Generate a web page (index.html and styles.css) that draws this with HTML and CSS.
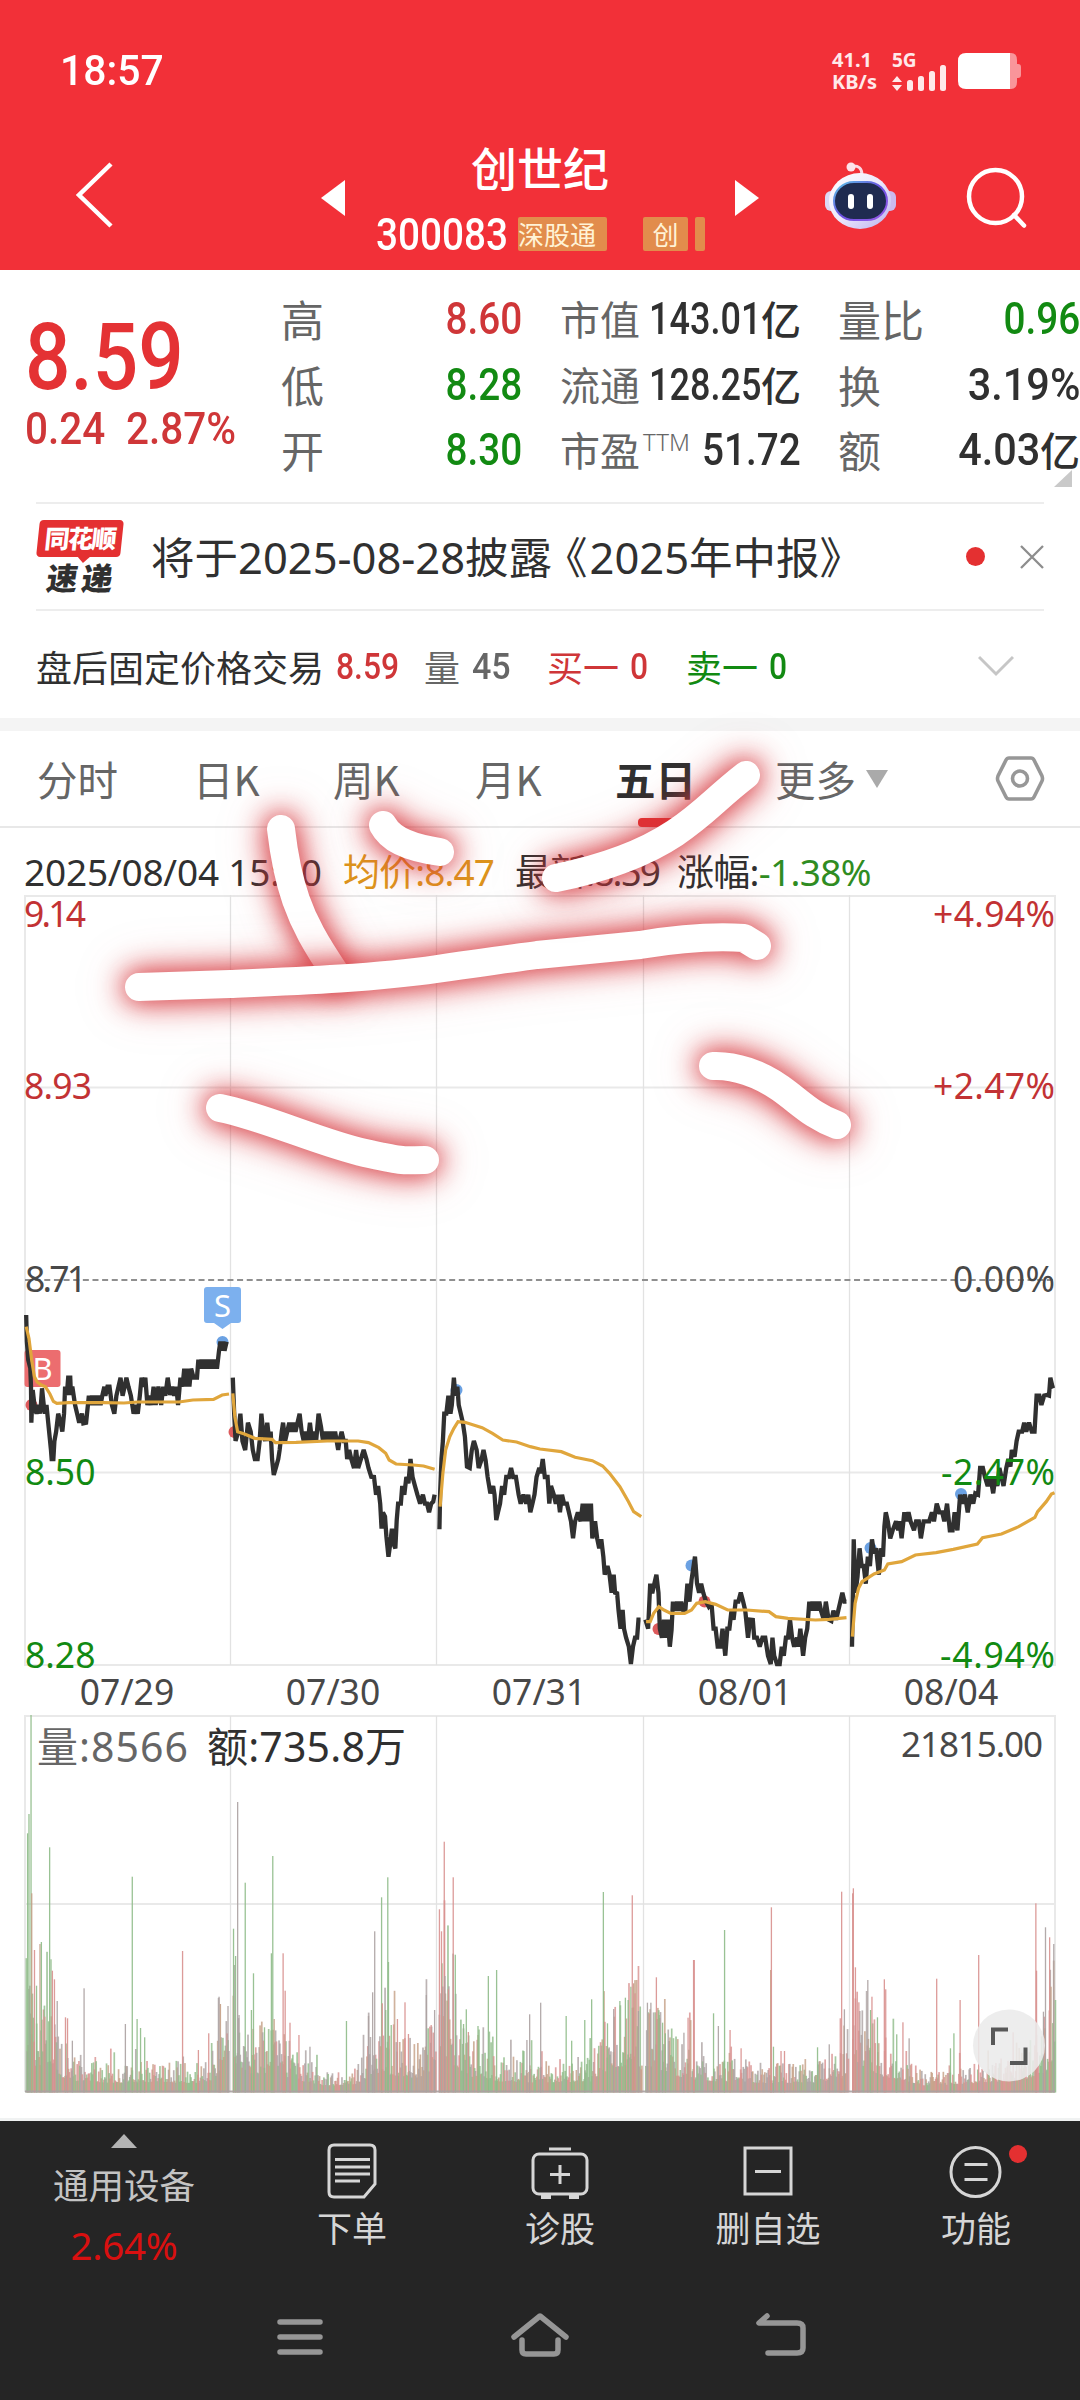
FILE: index.html
```html
<!DOCTYPE html>
<html lang="zh-CN">
<head>
<meta charset="utf-8">
<title>创世纪 300083</title>
<link rel="stylesheet" href="styles.css">
</head>
<body>
<div class="screen">
  <header class="top">
    <div class="status">
      <span class="clock din">18:57</span>
      <div class="status-right">
        <div class="speed"><span>41.1</span><span>KB/s</span></div>
        <svg class="signal" width="56" height="44" viewBox="0 0 56 44">
          <text x="0" y="18" class="sig-text">5G</text>
          <g fill="#ffe9ea"><path d="M5 27l5 6H0zM5 42l5-6H0z"/><rect x="15" y="31" width="6" height="11" rx="2.5"/><rect x="26" y="27" width="6" height="15" rx="2.5"/><rect x="37" y="22" width="6" height="20" rx="2.5"/><rect x="48" y="16" width="6" height="26" rx="2.5"/></g>
        </svg>
        <svg class="battery" width="64" height="36" viewBox="0 0 64 36">
          <path d="M52 0h1q6 0 6 7v4h1q3 0 3 3v8q0 3-3 3h-1v4q0 7-6 7h-1z" fill="#f9959a"/>
          <path d="M8 0h44v36H8q-8 0-8-8V8q0-8 8-8z" fill="#fff"/>
        </svg>
      </div>
    </div>
    <div class="titlebar">
      <svg class="back" width="40" height="70" viewBox="0 0 40 70"><path d="M36 4L4 35l32 31" fill="none" stroke="#fff" stroke-width="4.5"/></svg>
      <svg class="prev" width="24" height="36" viewBox="0 0 24 36"><path d="M24 0v36L0 18z" fill="#fff"/></svg>
      <div class="stock">
        <h1>创世纪</h1>
        <div class="codeline"><span class="din code">300083</span><span class="tag tag-a">深股通</span><span class="tag tag-b">创</span><span class="tag tag-c"></span></div>
      </div>
      <svg class="next" width="24" height="36" viewBox="0 0 24 36"><path d="M0 0v36l24-18z" fill="#fff"/></svg>
      <svg class="robot" width="74" height="68" viewBox="0 0 74 68">
        <defs><linearGradient id="shell" x1="0" y1="0" x2="1" y2="1"><stop offset="0" stop-color="#fff"/><stop offset=".5" stop-color="#ece8fb"/><stop offset="1" stop-color="#b8b0ee"/></linearGradient>
        <linearGradient id="rim" x1="0" y1="0" x2="1" y2="1"><stop offset="0" stop-color="#5cc8e8"/><stop offset=".5" stop-color="#6a4fe0"/><stop offset="1" stop-color="#9a5ce8"/></linearGradient></defs>
        <path d="M28 4q10-1 10 9" fill="none" stroke="#fbd9e4" stroke-width="3"/><circle cx="27" cy="5" r="4.5" fill="#fde3ea"/>
        <rect x="1" y="29" width="14" height="20" rx="6" fill="#dcd9f6"/><rect x="58" y="29" width="14" height="20" rx="6" fill="#cbb9ee"/>
        <rect x="5" y="11" width="62" height="56" rx="31" ry="28" fill="url(#shell)"/>
        <rect x="10" y="20" width="53" height="38" rx="20" fill="#1f2b50" stroke="url(#rim)" stroke-width="2"/>
        <rect x="24" y="32" width="6" height="15" rx="3" fill="#fff"/><rect x="43" y="32" width="6" height="15" rx="3" fill="#fff"/>
      </svg>
      <svg class="search" width="62" height="62" viewBox="0 0 62 62"><g fill="none" stroke="#fff" stroke-width="4.5"><circle cx="29.500" cy="29.500" r="26.500"/><path d="M48 48l10 10.500" stroke-linecap="round"/></g></svg>
    </div>
  </header>

  <section class="quote">
    <div class="price-col">
      <div class="price din">8.59</div>
      <div class="delta"><span class="din">0.24</span><span class="din">2.87%</span></div>
    </div>
    <div class="stats">
      <span class="lab">高</span><span class="val up"><b class="din">8.60</b></span><span class="lab">市值</span><span class="val"><b class="din tight">143.01</b>亿</span><span class="lab">量比</span><span class="val down"><b class="din">0.96</b></span>
      <span class="lab">低</span><span class="val down"><b class="din">8.28</b></span><span class="lab">流通</span><span class="val"><b class="din tight">128.25</b>亿</span><span class="lab">换</span><span class="val"><b class="din wide">3.19%</b></span>
      <span class="lab">开</span><span class="val down"><b class="din">8.30</b></span><span class="lab">市盈<sup>TTM</sup></span><span class="val"><b class="din">51.72</b></span><span class="lab">额</span><span class="val"><b class="din wide">4.03</b>亿</span>
    </div>
    <i class="corner"></i>
  </section>

  <section class="news">
    <div class="logo"><span class="logo-top">同花顺</span><span class="logo-bot">速递</span></div>
    <p>将于2025-08-28披露<span class="open">《</span>2025年中报》</p>
    <i class="dot"></i>
    <svg width="24" height="24" viewBox="0 0 24 24"><path d="M1 1l22 22M23 1L1 23" stroke="#8d8d8d" stroke-width="2.300"/></svg>
  </section>

  <section class="after">
    <span class="after-t">盘后固定价格交易</span><b class="din up a1">8.59</b>
    <span class="gray a2">量</span><b class="din gray a3">45</b>
    <span class="up a4">买一</span><b class="din up a5">0</b>
    <span class="down a6">卖一</span><b class="din down a7">0</b>
    <svg class="chev" width="36" height="22" viewBox="0 0 36 22"><path d="M1 2l17 17L35 2" fill="none" stroke="#c6c6c6" stroke-width="3"/></svg>
  </section>
  <div class="band"></div>

  <nav class="tabs">
    <span>分时</span><span>日K</span><span>周K</span><span>月K</span><span class="on">五日</span><span class="more">更多<i></i></span>
    <svg width="50" height="48" viewBox="0 0 50 48"><g fill="none" stroke="#979797" stroke-width="3.600"><path d="M14 3h22q2 0 3 2l8 16q1 3 0 5l-8 16q-1 2-3 2H14q-2 0-3-2L3 26q-1-2 0-5l8-16q1-2 3-2z"/><circle cx="25" cy="23.500" r="7.500"/></g></svg>
  </nav>

  <div class="info">
    <span>2025/08/04 15:00</span><span class="avg">均价:8.47</span><span class="last">最新:8.59</span><span>涨幅:<em>-1.38%</em></span>
  </div>

  <svg class="chart" width="1080" height="1224" viewBox="0 894 1080 1224">
    <g fill="none" stroke="#e9e9e9" stroke-width="2">
      <path d="M24 896H1056M24 1087.500H1056M24 1472.500H1056M24 1665H1056M24 1716H1056M24 1904H1056M25 895V1665M1055 895V1665M25 1716V2092M1055 1716V2092"/>
      <path stroke="#e2e2e2" stroke-width="1.300" d="M230.500 895V1665M436.500 895V1665M643.500 895V1665M849.500 895V1665M230.500 1716V2092M436.500 1716V2092M643.500 1716V2092M849.500 1716V2092"/>
    </g>
    <path d="M25 1280H1055" stroke="#8f8f8f" stroke-width="1.800" stroke-dasharray="6 3.640" fill="none"/>
    <g fill="#6ba1e2"><circle cx="222.500" cy="1342" r="6"/><circle cx="456.500" cy="1390" r="6"/><circle cx="691.500" cy="1565.500" r="6"/><circle cx="870.500" cy="1548" r="6"/><circle cx="961" cy="1494" r="6"/></g>
    <g fill="#dd5a5c"><circle cx="31.500" cy="1405" r="6"/><circle cx="234.500" cy="1432" r="6"/><circle cx="658.500" cy="1629" r="6"/><circle cx="704.500" cy="1601.500" r="6"/></g>
    <rect x="24.500" y="1350" width="36" height="37" rx="3" fill="#ec6d6f"/>
    <path d="M207 1287h31q3 0 3 3v30q0 3-3 3h-7l-8.500 6-8.500-6h-7q-3 0-3-3v-30q0-3 3-3z" fill="#7cb0ee"/>
    <text x="222.500" y="1317" class="mk" text-anchor="middle">S</text>
    <text x="42.500" y="1380" class="mk" text-anchor="middle">B</text>
    <g id="lines"></g>
    <g class="ax">
      <g class="t-up"><text x="24" y="927" textLength="62">9.14</text><text x="24" y="1099" textLength="68">8.93</text><text x="1055" y="927" text-anchor="end" textLength="122">+4.94%</text><text x="1055" y="1099" text-anchor="end" textLength="122">+2.47%</text></g>
      <g class="t-n"><text x="25" y="1292" textLength="62">8.71</text><text x="1055" y="1292" text-anchor="end" textLength="102">0.00%</text>
        <g text-anchor="middle"><text x="127" y="1705">07/29</text><text x="333" y="1705">07/30</text><text x="539" y="1705">07/31</text><text x="745" y="1705">08/01</text><text x="951" y="1705">08/04</text></g></g>
      <g class="t-dn"><text x="25" y="1485">8.50</text><text x="25" y="1668">8.28</text><text x="1055" y="1485" text-anchor="end" textLength="114">-2.47%</text><text x="1055" y="1668" text-anchor="end" textLength="115">-4.94%</text></g>
    </g>
    <g id="volume"></g>
    <text x="37" y="1762" class="vt vt-g" textLength="151">量:8566</text><text x="207" y="1762" class="vt" textLength="199">额:735.8万</text>
    <text x="1043" y="1757" class="vmax" text-anchor="end" textLength="142">21815.00</text>
    <circle cx="1009" cy="2045.500" r="36" fill="#ebebeb" fill-opacity=".88"/>
    <g fill="none" stroke="#585858" stroke-width="4"><path d="M993 2045v-15.500h15M1025.500 2047.500v15.500h-15.500"/></g>
  </svg>

  <footer class="toolbar">
    <div class="sector"><i></i><span>通用设备</span><em>2.64%</em></div>
    <div class="tool"><svg width="60" height="60" viewBox="0 0 60 60"><g fill="none" stroke="#d6d6d6" stroke-width="3"><path d="M12 4h36q5 0 5 5v34l-11 13H12q-5 0-5-5V9q0-5 5-5z"/><path d="M13 18.500h35M13 26h35M13 33h35M13 40h25"/></g></svg><span>下单</span></div>
    <div class="tool"><svg width="60" height="60" viewBox="0 0 60 60"><g fill="none" stroke="#d6d6d6" stroke-width="3"><rect x="3" y="13" width="54" height="40" rx="6"/><path d="M19 8h22M30 24v19M20 33.500h20"/><path d="M11 56h10M39 56h10" stroke-width="4"/></g></svg><span>诊股</span></div>
    <div class="tool"><svg width="60" height="60" viewBox="0 0 60 60"><g fill="none" stroke="#d6d6d6" stroke-width="3"><rect x="7" y="7" width="46" height="46"/><path d="M17 30.500h26"/></g></svg><span>删自选</span></div>
    <div class="tool"><svg width="60" height="60" viewBox="0 0 60 60"><g fill="none" stroke="#d6d6d6" stroke-width="3"><circle cx="29.500" cy="31" r="24.500"/><path d="M18.500 23.500h23M18.500 38.500h23"/></g></svg><i class="badge"></i><span>功能</span></div>
  </footer>
  <div class="sysnav">
    <svg width="60" height="50" viewBox="0 0 60 50"><path d="M10 10h40M10 25h40M10 40h40" stroke="#969696" stroke-width="5.500" stroke-linecap="round"/></svg>
    <svg width="60" height="50" viewBox="0 0 60 50"><path d="M4 25L30 4l26 21M12 28v10q0 4 4 4h28q4 0 4-4V28" fill="none" stroke="#969696" stroke-width="5.500" stroke-linecap="round" stroke-linejoin="round"/></svg>
    <svg width="60" height="50" viewBox="0 0 60 50"><path d="M17 4l-8 7h38q6 0 6 5v20q0 5-6 5H18" fill="none" stroke="#969696" stroke-width="5.500" stroke-linecap="round" stroke-linejoin="round"/></svg>
  </div>

  <svg class="ink" width="1080" height="2400" viewBox="0 0 1080 2400">
    <path d="M281 829C284 855 288 877 296 900S315 943 336 974"/>
    <path d="M139 987L230 984C300 981 375 978 437 969S500 960 537 955L640 945Q700 935 744 938L757 946"/>
    <path d="M383 825C390 838 405 847 440 852"/>
    <path d="M556 878C605 868 645 853 675 833S715 799 746 775"/>
    <path d="M220 1108C265 1117 320 1143 365 1153S405 1160 425 1160"/>
    <path d="M713 1066C735 1065 760 1074 780 1088S812 1116 837 1125"/>
  </svg>
</div>
<script src="chart.js"></script>
</body>
</html>
```
FILE: styles.css
```css
* { box-sizing: border-box; }
body { margin: 0; background: #fff; }
.screen { position: relative; width: 1080px; height: 2400px; overflow: hidden; background: #fff; color: #303030; font-family: "Noto Sans", "Noto Sans CJK SC", sans-serif; }
h1, p { margin: 0; }
i, em { font-style: normal; }
.din { display: inline-block; font-family: Roboto, "Liberation Sans", sans-serif; font-weight: 500; transform: scaleX(.86); transform-origin: left center; white-space: nowrap; }
.up { color: #cf3638; }
.down { color: #128a12; }
.gray { color: #666; }

.top { height: 270px; background: #f23038; color: #fff; }
.status { height: 140px; padding: 0 58px 0 60px; display: flex; align-items: center; justify-content: space-between; }
.clock { font-size: 43px; transform: scaleX(.95); }
.status-right { display: flex; align-items: center; padding-top: 2px; color: #ffe9ea; }
.speed { display: flex; flex-direction: column; width: 60px; font: 700 20px/22px "Noto Sans", sans-serif; }
.signal { margin-right: 10px; }
.sig-text { font: 700 19px "Noto Sans", sans-serif; fill: #ffe9ea; }
.titlebar { height: 130px; display: flex; align-items: flex-start; padding-left: 75px; }
.back { margin-top: 20px; }
.prev { margin: 40px 0 0 206px; }
.stock { width: 390px; text-align: center; }
h1 { margin-top: -1px; font: 500 46px/54px "Noto Sans CJK SC", sans-serif; }
.codeline { display: flex; align-items: center; height: 40px; margin-top: 21px; padding-left: 31px; }
.code { font-size: 45px; width: 142px; text-align: left; }
.tag { height: 34px; background: #e28c4c; color: #fff3d6; font: 400 26px/33px "Noto Sans CJK SC", sans-serif; border-radius: 2px; }
.tag-a { width: 89px; text-align: left; }
.tag-b { width: 45px; margin-left: 36px; }
.tag-c { width: 10px; margin-left: 7px; }
.next { margin: 40px 0 0 0; }
.robot { margin: 22px 0 0 65px; }
.search { margin: 27px 0 0 68px; }

.quote { height: 232px; position: relative; display: flex; }
.price-col { width: 281px; padding-left: 25px; }
.price { font-size: 92px; line-height: 100px; margin-top: 38px; color: #e43234; transform: scaleX(.87); }
.delta { display: flex; gap: 11px; color: #cf3638; margin-top: -2px; }
.delta .din { font-size: 44px; line-height: 46px; transform: scaleX(.92); }
.delta .din:first-child { width: 90px; }
.stats { display: grid; grid-template-columns: 80px 199px 80px 198px 100px 142px; grid-auto-rows: 65.500px; padding-top: 16px; height: 214px; font: 400 40px/65px "Noto Sans CJK SC", sans-serif; }
.lab { color: #666; white-space: nowrap; }
.lab:nth-child(6n+1), .lab:nth-child(6n+5) { font-size: 43px; }
.lab sup { font: 300 24px/24px "Noto Sans", sans-serif; vertical-align: 15px; margin-left: 3px; }
.val { display: flex; justify-content: flex-end; align-items: center; font-weight: 500; white-space: nowrap; }
.val .din { transform-origin: right center; font-size: 45px; }
.val .tight { transform: scaleX(.8); }
.val .wide { transform: scaleX(.92); }
.val:nth-child(6n+2) { padding-right: 38px; }
.val:nth-child(6n+4) { padding-right: 37px; }
.corner { position: absolute; right: 8px; bottom: 15px; width: 18px; height: 17px; background: #c9c9c9; clip-path: polygon(100% 0, 100% 100%, 0 100%); }

.news { height: 109px; margin: 0 36px; border-top: 2px solid #ededed; border-bottom: 2px solid #ededed; display: flex; align-items: center; }
.logo { width: 91px; height: 74px; display: flex; flex-direction: column; align-items: flex-start; margin-left: 2px; }
.logo-top { width: 84px; height: 37px; background: #e43031; color: #fff; border-radius: 4px; font: 900 25px/34px "Noto Sans CJK SC", sans-serif; text-align: center; transform: skewX(-6deg); letter-spacing: -1.500px; }
.logo-bot { position: relative; font: 900 31px/32px "Noto Sans CJK SC", sans-serif; letter-spacing: 4px; padding-left: 9px; transform: skewX(-8deg); margin-top: 4px; white-space: nowrap; }
.logo-bot::before { content: ""; position: absolute; left: 36px; top: -5px; border: 7px solid transparent; border-top-color: #e43031; border-bottom: 0; }
.news p { flex: 1; padding-left: 22px; font: 400 43.500px/60px "Noto Sans", "Noto Sans CJK SC", sans-serif; white-space: nowrap; }
.open { margin-left: -8px; margin-right: 2px; }
.dot { width: 19px; height: 19px; border-radius: 50%; background: #e43031; margin-right: 35px; }

.after { height: 107px; padding: 2px 66px 0 36px; display: flex; align-items: center; font: 400 36px/50px "Noto Sans CJK SC", sans-serif; }
.after .din { font-size: 37px; line-height: 50px; padding-top: 2px; }
.after-t { width: 300px; white-space: nowrap; }
.a1 { width: 88px; } .a2 { width: 48px; } .a3 { width: 75px; } .a4 { width: 83px; } .a5 { width: 56px; } .a6 { width: 83px; } .a7 { width: 30px; }
.after .a3 { transform: scaleX(.92); }
.chev { margin-left: auto; }
.band { height: 13px; background: #f4f4f4; }

.tabs { height: 97px; border-bottom: 2px solid #e8e8e8; display: flex; align-items: center; padding-left: 37px; font: 400 40.500px/60px "Noto Sans CJK SC", sans-serif; color: #666; }
.tabs span { width: 140px; white-space: nowrap; }
.tabs span:nth-child(1) { width: 156px; }
.tabs span:nth-child(3) { width: 142px; }
.tabs .on { position: relative; width: 160px; color: #303030; font-weight: 700; }
.tabs .on::after { content: ""; position: absolute; left: 23px; bottom: -18px; width: 38px; height: 9px; border-radius: 4px; background: #e43031; }
.tabs .more { width: 220px; display: flex; align-items: center; }
.more i { border: 11px solid transparent; border-top: 18px solid #aaa; border-bottom: 0; margin-left: 10px; }

.info { height: 66px; padding: 21px 0 0 24px; display: grid; grid-template-columns: 319px 172px 162px 200px; font-size: 37px; line-height: 45px; white-space: nowrap; letter-spacing: -.200px; }
.info span { height: 45px; }
.info .avg { color: #dd951c; letter-spacing: -.900px; }
.info .last { letter-spacing: -1.900px; }
.info span:last-child { letter-spacing: -.700px; }
.info em { color: #2f8c22; }
.chart { display: block; }
.ax { font: 400 35.500px "Noto Sans", sans-serif; }
.t-up { fill: #c23234; } .t-n { fill: #484848; } .t-dn { fill: #128a12; }
.mk { font: 400 31px "Noto Sans", sans-serif; fill: #fff; }
.vt { font: 400 41px "Noto Sans", "Noto Sans CJK SC", sans-serif; fill: #303030; }
.vt-g { fill: #666; }
.vmax { font: 400 35px "Noto Sans", sans-serif; fill: #484848; }
.price-line { fill: none; stroke: #303030; stroke-width: 4.300; stroke-linejoin: miter; stroke-miterlimit: 2; vector-effect: non-scaling-stroke; }
.avg-line { fill: none; stroke: #e0a63c; stroke-width: 3.200; vector-effect: non-scaling-stroke; }

.toolbar { height: 171px; background: #252525; border-top: 3px solid #f0f2f2; display: grid; grid-template-columns: 248px repeat(4, 208px); color: #d6d6d6; font: 400 35px/50px "Noto Sans CJK SC", sans-serif; }
.sector { display: flex; flex-direction: column; align-items: center; }
.sector i { border: 13px solid transparent; border-bottom: 14px solid #b4b4b4; border-top: 0; margin-top: 13px; }
.sector span { margin-top: 11px; color: #c4c4c4; font-size: 35.500px; }
.sector em { font: 400 38.500px/50px "Noto Sans", sans-serif; color: #d91010; margin-top: 11px; letter-spacing: -.300px; }
.tool { position: relative; display: flex; flex-direction: column; align-items: center; padding-top: 20px; }
.tool span { margin-top: 1px; }
.badge { position: absolute; left: 137px; top: 24px; width: 18px; height: 18px; border-radius: 50%; background: #e43031; }
.sysnav { height: 114px; background: #252525; display: flex; justify-content: center; gap: 180px; padding-top: 23px; }
.ink { position: absolute; left: 0; top: 0; pointer-events: none; }
.ink path { fill: none; stroke: #fff; stroke-width: 28; stroke-linecap: round; stroke-linejoin: round; filter: drop-shadow(0 0 13px rgba(212, 50, 56, .95)) drop-shadow(0 0 17px rgba(218, 60, 66, .5)); }
```
FILE: chart.js
```js
const NS = 'http://www.w3.org/2000/svg';
const lines = document.getElementById('lines');
const volume = document.getElementById('volume');

// Repeats a toggle between two ticks from x0 to x1.
function tog(x0, x1, a, b) {
  let s = '';
  for (let x = x0, k = 0; x <= x1; x += 5, k++) s += `${x},${k % 2 ? b : a} `;
  return s;
}

const price = [
  [0, '76,165 78,245 82,300 88,325 90,380 91,488 95,390 100,435 106,461 112,435 117,461 122,385 127,435 131,461 135,435 140,488 148,570 150,597 155,597 158,543 163,515 169,461 176,488 181,515 186,461 189,380 194,405 198,353 204,353 206,405 210,380 218,435 224,461 230,488 238,461 242,490 250,488 258,407 ' + tog(262, 300, 435, 407) + '303,380 306,407 312,380 318,380 325,435 332,461 338,407 344,380 350,353 356,407 362,380 367,353 373,380 380,407 388,461 394,435 400,461 406,407 411,353 417,380 422,353 428,435 434,407 440,435 446,380 452,435 460,380 468,435 474,380 480,407 487,353 494,405 500,380 506,407 512,380 517,435 524,353 ' + tog(530, 558, 380, 326) + '562,353 572,353 576,299 ' + tog(580, 632, 326, 299) + '636,272 640,245 644,272 648,245 652,272 658,245'],
  [0, '676,353 680,461 684,543 692,515 698,461 704,543 712,570 720,488 728,515 734,570 740,597 748,597 754,543 759,461 764,515 770,543 776,488 782,543 786,515 790,597 795,645 802,620 808,597 812,570 818,515 822,488 828,543 834,515 840,488 846,515 852,488 858,515 864,488 870,461 876,515 882,543 888,515 894,543 900,488 906,543 912,515 918,543 925,461 932,500 ' + tog(938, 976, 543, 515) + '982,570 986,540 992,515 998,543 1004,543 1008,597 1014,570 1020,597 1028,624 1034,570 1040,624 1048,597 1056,570 1064,597 1070,624 1078,650 1086,651 1092,704 1098,678 1104,731 1108,806 1112,757 1118,770 1122,830 1128,890 1132,860 1138,806 1142,850 1148,865 1152,780 1156,731 1164,731 1168,678 1174,704 1180,651 1186,670 1192,597 1198,651 1205,678 1212,704 1220,731 1228,704 1234,731 1240,731 1246,757 1252,731 1258,725 1262,704'],
  [0, '1276,808 1278,700 1282,597 1286,543 1290,461 1296,461 1302,407 1308,461 1312,435 1318,353 1322,407 1328,380 1332,435 1338,461 1344,488 1350,530 1356,620 1364,624 1370,570 1376,543 1384,570 1390,624 1398,600 1404,570 1410,600 1416,651 1424,700 1432,678 1436,704 1441,780 1446,757 1452,731 1458,678 1464,704 1470,651 1478,651 1484,624 1490,651 1498,651 1506,704 1512,731 1520,704 1528,731 1534,704 1540,757 1546,731 1552,704 1558,651 1566,624 1570,640 1576,597 1582,651 1590,651 1595,731 1600,678 1608,704 1614,731 1620,704 1626,757 1632,704 1638,731 1646,731 1652,757 1658,784 1664,835 1670,784 1678,757 1686,784 1692,731 1698,784 1704,731 1710,784 1716,731 1720,835 1728,784 1734,835 1740,865 1746,838 1752,890 1756,944 1764,918 1770,944 1776,998 1782,944 1786,998 1792,1000 1796,1050 1802,1106 1808,1050 1812,1106 1818,1133 1826,1160 1832,1212 1838,1160 1844,1133 1850,1133 1854,1079 1860,1079'],
  [540, '306,1079 314,1106 320,971 326,1000 332,971 338,944 344,998 348,1106 354,1133 360,1079 366,1133 371,1079 377,1160 382,1110 386,1025 392,1052 398,1025 404,1052 410,1025 416,1052 422,1052 428,971 434,1025 440,960 450,890 456,971 462,998 468,971 474,998 482,1025 490,1040 498,1030 504,1106 510,1106 516,1160 524,1160 530,1106 538,1187 544,1106 550,1106 556,1052 562,1079 568,1025 576,1025 583,998 590,1025 596,1052 604,1133 610,1079 618,1080 622,1133 630,1133 638,1160 646,1133 654,1133 662,1187 670,1212 675,1133 680,1187 688,1212 696,1212 702,1160 708,1187 714,1133 720,1133 726,1079 732,1133 738,1160 746,1133 750,1160 756,1106 764,1187 770,1133 776,1106 782,1025 ' + tog(786, 820, 1052, 1025) + '824,1079 830,1025 838,1079 846,1083 852,1052 860,1079 866,1052 872,1025 878,998 884,1025 890,1025'],
  [540, '906,1160 911,838 916,998 922,950 928,865 934,918 940,918 946,971 952,890 958,918 964,838 970,880 976,865 984,944 990,865 996,890 1000,800 1004,757 1010,784 1017,835 1024,811 1034,784 1040,811 1044,784 1050,835 1058,757 1064,784 1070,757 1076,784 1086,811 1092,784 1100,784 1106,835 1114,784 1130,784 1138,757 1144,784 1152,731 1160,757 1168,757 1174,784 1182,731 1190,811 1198,811 1204,757 1212,811 1220,704 1226,731 1234,704 1242,757 1250,704 1258,731 1264,700 1272,704 1278,624 1286,624 1292,651 1300,678 1308,651 1316,700 1322,651 1328,678 1334,624 1340,651 1346,678 1354,624 1360,597 1366,620 1370,570 1378,590 1384,543 1390,515 1400,515 1406,488 1412,515 1420,488 1428,515 1436,515 1442,407 1450,407 1456,435 1464,407 1472,405 1478,407 1482,353 1488,380 1490,385']
];
const average = [
  [0, '76,200 84,235 92,300 100,350 108,366 120,375 132,380 145,402 155,424 165,430 200,428 300,428 360,429 400,426 520,426 560,420 620,418 645,405 665,402'],
  [0, '676,400 682,470 690,515 710,522 740,535 790,538 800,548 860,547 950,543 1040,543 1070,548 1100,563 1120,580 1130,600 1150,612 1200,615 1230,618 1262,628'],
  [0, '1278,740 1286,640 1294,570 1306,530 1318,505 1330,485 1350,487 1400,503 1430,520 1460,540 1500,546 1540,560 1568,567 1630,575 1670,592 1720,602 1750,618 1770,640 1800,680 1825,725 1840,755 1862,770'],
  [540, '308,1085 320,1085 330,1060 345,1040 360,1050 380,1060 420,1060 440,1050 455,1030 480,1025 510,1033 545,1050 600,1050 665,1055 685,1070 720,1075 800,1080 840,1078 890,1073'],
  [540, '907,1130 915,1030 925,985 935,965 950,955 970,942 1000,930 1010,912 1050,905 1090,885 1150,878 1200,868 1270,852 1285,833 1340,822 1390,800 1437,772 1445,755 1470,725 1485,702 1494,698']
];
function draw(set, cls) {
  for (const [dx, pts] of set) {
    const p = document.createElementNS(NS, 'polyline');
    p.setAttribute('points', pts);
    p.setAttribute('class', cls);
    p.setAttribute('transform', `translate(${dx} 1260) scale(.34438 .33333)`);
    lines.appendChild(p);
  }
}
draw(price, 'price-line');
draw(average, 'avg-line');

// Volume: one thin bar per minute, five sessions of 240 minutes.
const bottom = 2092.5;
const colors = { r: '#d8908e', g: '#8ebb88', n: '#aba1a1', o: '#c49f85' };
function bar(x, h, w, c, o) {
  const r = document.createElementNS(NS, 'rect');
  r.setAttribute('x', x.toFixed(2));
  r.setAttribute('y', (bottom - h).toFixed(1));
  r.setAttribute('width', w);
  r.setAttribute('height', h.toFixed(1));
  r.setAttribute('fill', colors[c]);
  r.setAttribute('opacity', o);
  volume.appendChild(r);
}
let seed = 83;
const rnd = () => (seed = (seed * 16807) % 2147483647) / 2147483647;
// Envelope of typical bar height by position in the session.
const env = [
  [[0, 170], [.06, 100], [.12, 135], [.16, 65], [.25, 42], [.45, 32], [.6, 36], [.85, 32], [.93, 50], [.96, 105], [1, 90]],
  [[0, 140], [.08, 80], [.2, 80], [.35, 40], [.45, 19], [.6, 24], [.7, 85], [.8, 70], [.92, 55], [1, 100]],
  [[0, 180], [.08, 115], [.15, 65], [.3, 40], [.5, 34], [.75, 40], [.85, 100], [.97, 135], [1, 95]],
  [[0, 110], [.1, 90], [.2, 50], [.35, 40], [.6, 32], [.85, 34], [.95, 52], [1, 66]],
  [[0, 155], [.05, 115], [.14, 66], [.25, 46], [.35, 20], [.5, 24], [.65, 34], [.85, 50], [.95, 85], [1, 170]]
];
const starts = [25.5, 232.5, 438.5, 645, 852];
const hues = ['ggron', 'gronn', 'grong', 'rgonn', 'rorng'];
env.forEach((e, d) => {
  for (let i = 0; i < 236; i++) {
    const t = i / 235;
    let k = 0;
    while (k < e.length - 2 && e[k + 1][0] < t) k++;
    const f = (t - e[k][0]) / (e[k + 1][0] - e[k][0]);
    const base = e[k][1] + f * (e[k + 1][1] - e[k][1]);
    const q = rnd();
    const h = base * (.2 + .65 * q * q + (rnd() > .9 ? .8 * rnd() : 0)) + 3;
    bar(starts[d] + i * .862, h, 1.7, hues[d][Math.floor(rnd() * 5)], .8);
  }
});
// Outstanding minutes: position, top edge, hue.
const spikes = '40,400,g 42,342,g 45,45,g 46,580,o 50,750,r 53,857,g 58,732,o 60,726,g 65,950,r 72,442,g 74,778,g 76,812,r 79,838,r 83,903,n 95,952,r 98,955,r 105,1022,n 122,865,n 182,972,n 192,530,g 199,957,g 204,984,g 210,1012,g 265,753,r 288,1050,r 303,1000,r 318,890,n 320,912,o 331,918,n 339,686,g 342,768,g 345,306,n 347,945,n 356,548,g 365,930,g 368,820,g 384,982,g 394,760,g 396,468,g 398,957,o 411,760,r 414,872,r 421,968,r 434,1005,r 450,1040,n 503,963,g 535,948,n 541,877,n 544,694,n 554,592,g 555,910,r 560,930,g 563,532,g 564,786,g 568,975,g 577,957,r 588,907,r 593,1002,r 619,885,n 626,975,r 631,930,n 638,628,r 641,694,r 645,425,r 646,828,n 651,868,r 658,532,r 661,764,g 673,972,g 677,928,g 680,996,r 694,978,g 709,828,g 721,810,g 765,1020,n 769,943,n 785,908,n 822,948,g 830,1022,g 849,960,g 859,898,g 876,576,g 882,970,g 891,927,n 900,903,g 908,893,g 912,900,g 916,860,g 918,586,r 920,850,o 922,880,r 927,933,n 940,908,n 945,908,n 953,832,r 957,945,g 962,968,g 966,1000,g 993,998,n 999,953,r 1007,780,r 1008,780,r 1036,940,g 1043,978,n 1052,690,g 1060,990,r 1076,1045,r 1119,810,o 1120,622,r 1123,1040,g 1134,1053,r 1139,1053,r 1187,1042,g 1204,1033,n 1220,955,r 1222,575,r 1226,928,n 1239,565,r 1238,580,r 1242,802,r 1247,907,r 1260,840,n 1264,930,g 1266,890,r 1274,952,g 1284,838,r 1286,868,r 1302,1003,g 1311,967,r 1320,1015,n 1360,836,r 1380,1045,g 1385,1000,g 1394,900,r 1421,765,r 1504,610,r 1505,812,r 1515,935,n 1518,682,n 1524,712,r 1526,860,o 1530,732,n';
for (const s of spikes.split(' ')) {
  const [x, y, c] = s.split(',');
  bar(x / 1.452 - .6, bottom - 1700 - y / 3, 1.3, c, .9);
}
bar(25, 2, 1030, 'n', .9);
```
